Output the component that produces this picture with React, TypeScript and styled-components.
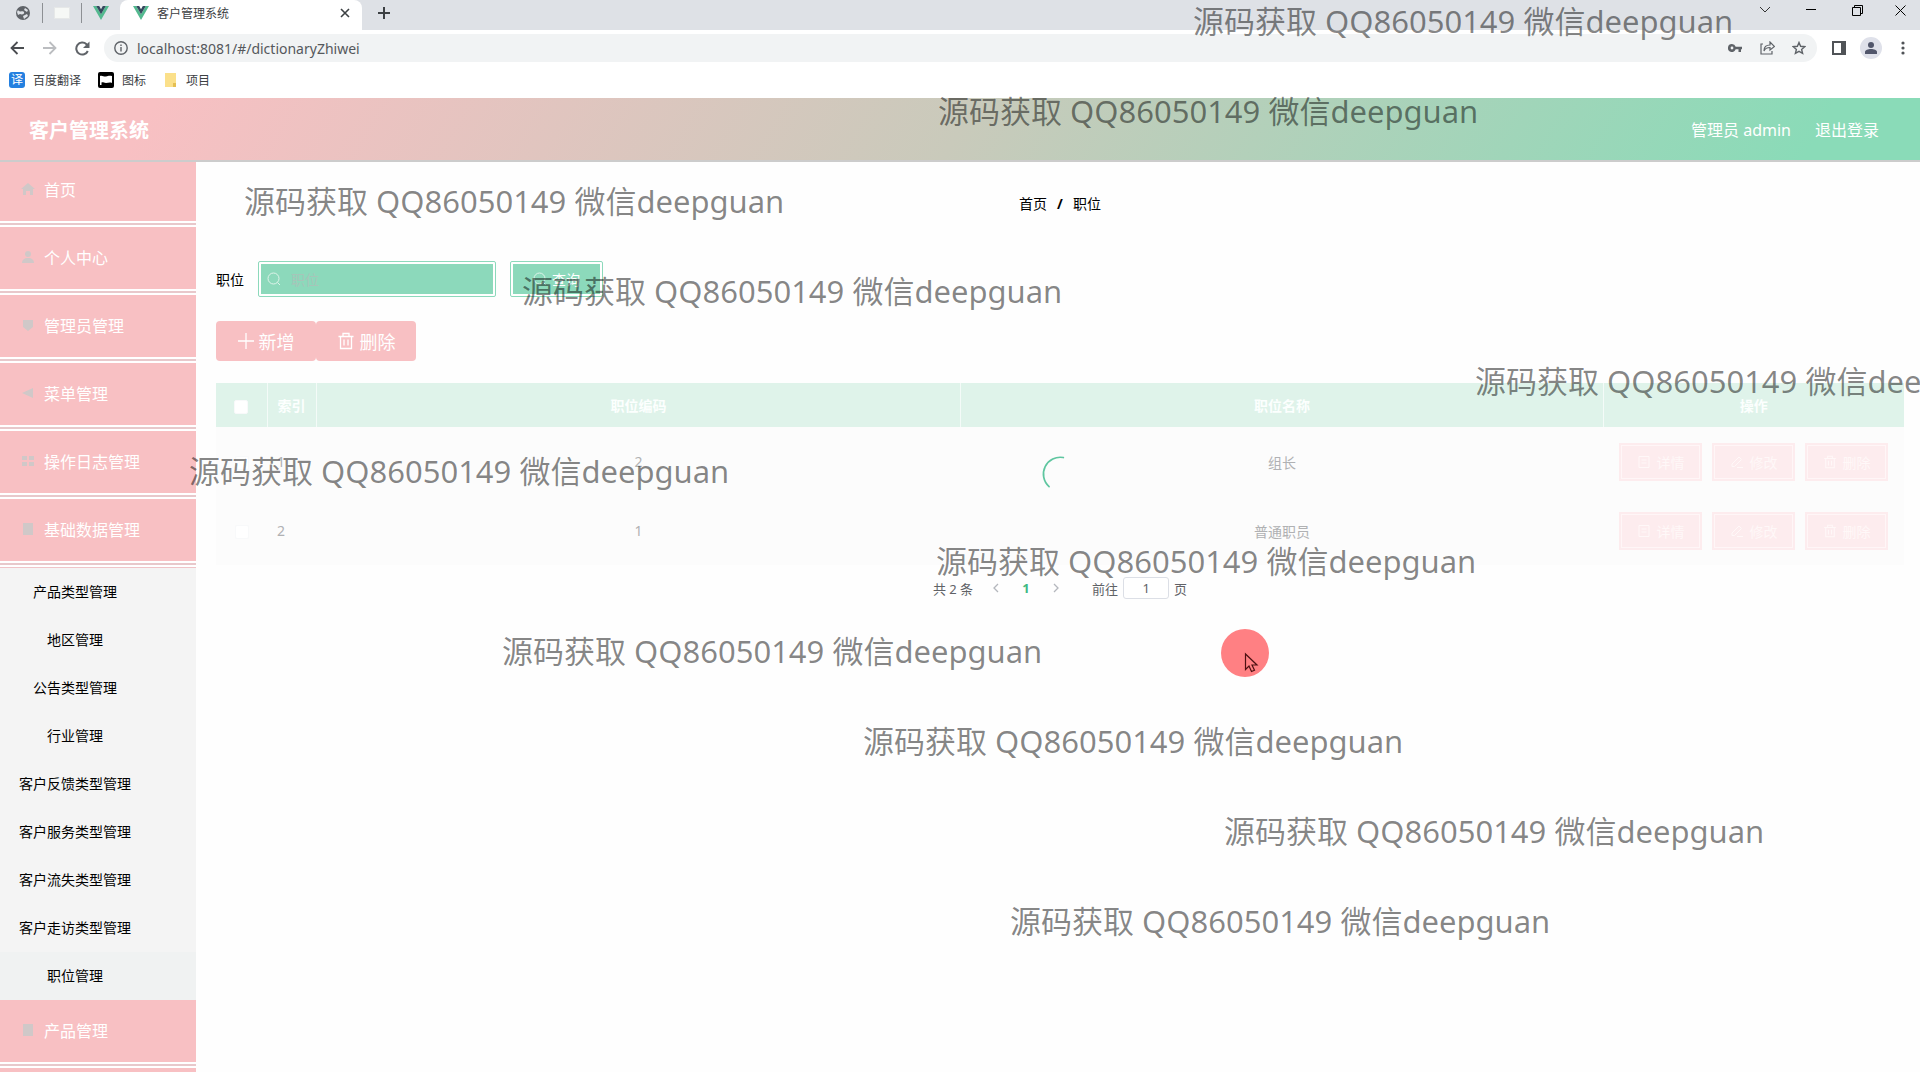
import React from 'react';
import styled, { createGlobalStyle, css } from 'styled-components';

const PINK = '#f8c0c3';
const GREEN = '#8cd9bb';

const GlobalStyle = createGlobalStyle`
  *, *::before, *::after { box-sizing: border-box; }
  html, body, #root { height: 100%; }
  body {
    margin: 0;
    background: #fff;
    font-family: 'Noto Sans', 'Noto Sans CJK SC', sans-serif;
    font-size: 14px;
    color: #000;
    overflow: hidden;
  }
  button, input { font-family: inherit; }
  button { border: 0; padding: 0; background: none; color: inherit; }
  a { color: inherit; text-decoration: none; }
  ul { list-style: none; margin: 0; padding: 0; }
`;

const Screen = styled.div`
  position: relative;
  display: flex;
  flex-direction: column;
  height: 100vh;
  overflow: hidden;
`;

/* ---------- browser window ---------- */

const TabStrip = styled.div`
  display: flex;
  flex: none;
  height: 30px;
  background: #dee1e6;
`;

const PinnedTabs = styled.div`
  display: flex;
  align-items: center;
  width: 120px;
  height: 26px;
  padding-left: 3px;
`;

const PinnedTab = styled.button`
  display: flex;
  align-items: center;
  justify-content: center;
  width: 39px;
  height: 20px;
  & + & { border-left: 1px solid #8d9094; }
`;

const ActiveTab = styled.div`
  display: flex;
  align-items: center;
  gap: 8px;
  width: 242px;
  padding: 0 12px 4px 13px;
  background: #fff;
  border-radius: 8px 8px 0 0;
  font-size: 12px;
  color: #3c4043;
`;

const TabTitle = styled.span`
  flex: 1;
`;

const IconButton = styled.button`
  display: flex;
  align-items: center;
  justify-content: center;
  width: ${(p: { $w?: number }) => p.$w ?? 32}px;
  height: 26px;
`;

const WindowControls = styled.div`
  display: flex;
  margin-left: auto;
  height: 20px;
  align-items: center;
`;

const Toolbar = styled.div`
  display: flex;
  flex: none;
  align-items: center;
  height: 36px;
  padding-right: 1px;
  background: #fff;
`;

const AddressBar = styled.div`
  display: flex;
  flex: 1;
  align-items: center;
  height: 28px;
  margin-left: 6px;
  margin-right: 6px;
  padding: 0 2px 0 10px;
  border-radius: 14px;
  background: #f1f3f4;
`;

const AddressInput = styled.input`
  flex: 1;
  min-width: 0;
  border: 0;
  margin-left: 9px;
  padding: 0;
  background: transparent;
  font-size: 14px;
  color: #55585c;
  outline: none;
`;

const Avatar = styled.span`
  display: flex;
  align-items: center;
  justify-content: center;
  width: 22px;
  height: 22px;
  border-radius: 50%;
  background: #dfe1ea;
`;

const Bookmarks = styled.nav`
  display: flex;
  flex: none;
  align-items: center;
  gap: 17px;
  height: 32px;
  padding: 0 9px 4px;
  font-size: 12px;
  color: #3c4043;
`;

const Bookmark = styled.a`
  display: flex;
  align-items: center;
  gap: 8px;
`;

const TranslateBadge = styled.span`
  width: 16px;
  height: 16px;
  border-radius: 3px;
  background: #2480e0;
  color: #fff;
  font-size: 12px;
  line-height: 16px;
  text-align: center;
`;

/* ---------- application ---------- */

const Header = styled.header`
  display: flex;
  flex: none;
  align-items: center;
  justify-content: space-between;
  height: 64px;
  padding: 0 41px 0 29px;
  border-bottom: 2px solid #ccc;
  background: linear-gradient(120deg, ${PINK} 8%, #c9cabb 50%, #8adbb8 94%);
  color: #fff;
`;

const Brand = styled.h1`
  margin: 0;
  font-size: 20px;
  font-weight: 700;
`;

const UserNav = styled.div`
  display: flex;
  gap: 24px;
  font-size: 16px;
`;

const Body = styled.div`
  display: flex;
  flex: 1;
  min-height: 0;
`;

const Sidebar = styled.nav`
  flex: none;
  width: 196px;
  overflow: hidden;
  & > ul { margin-top: -3px; }
`;

const MenuItem = styled.li`
  height: 68px;
  background: ${PINK};
  &::after {
    content: '';
    display: block;
    height: 6px;
    background: linear-gradient(#fff 2px, #e8c8cb 2px, #e8c8cb 4px, #fff 4px);
  }
`;

const MenuLink = styled.a`
  display: flex;
  align-items: center;
  gap: 8px;
  height: 62px;
  padding: 0 20px 2px;
  color: #fff;
  font-size: 16px;
`;

const SubMenu = styled.ul`
  border-top: 1px solid #f0c4c8;
  background: #f4f4f4;
`;

const SubLink = styled.a`
  display: block;
  width: 100%;
  height: 48px;
  padding-right: 46px;
  background: ${(p: { $active?: boolean }) => (p.$active ? '#f0f2f2' : 'transparent')};
  line-height: 48px;
  text-align: center;
  white-space: nowrap;
`;

const Main = styled.main`
  flex: 1;
  min-width: 0;
  padding: 32px 16px 20px 20px;
  background: #fefefe;
`;

const Breadcrumb = styled.nav`
  display: flex;
  justify-content: center;
  gap: 10px;
  line-height: 20px;
`;

const SearchForm = styled.form`
  display: flex;
  align-items: center;
  gap: 14px;
  margin-top: 47px;
`;

const framed = css`
  display: flex;
  align-items: center;
  height: 36px;
  border: 3px solid #fff;
  border-radius: 2px;
  background: ${GREEN};
  outline: 1px solid ${GREEN};
  outline-offset: -1px;
`;

const SearchBox = styled.div`
  ${framed}
  width: 238px;
  padding-left: 6px;
  gap: 10px;
`;

const SearchInput = styled.input`
  flex: 1;
  min-width: 0;
  border: 0;
  padding: 0;
  background: transparent;
  outline: none;
  font-size: 14px;
  &::placeholder { color: #a6c5b9; opacity: 1; }
`;

const SearchButton = styled.button`
  ${framed}
  justify-content: center;
  gap: 5px;
  width: 93px;
  color: #fff;
  font-size: 14px;
`;

const ButtonBar = styled.div`
  display: flex;
  margin-top: 24px;
`;

const PinkButton = styled.button`
  display: flex;
  align-items: center;
  justify-content: center;
  gap: 5px;
  width: 100px;
  height: 40px;
  border-radius: 4px;
  background: ${PINK};
  color: #fff;
  font-size: 18px;
`;

const TableWrap = styled.div`
  position: relative;
  margin-top: 22px;
`;

const Table = styled.table`
  width: 100%;
  border-collapse: collapse;
  table-layout: fixed;
  text-align: center;
  color: #b0b1b3;
`;

const Th = styled.th`
  height: 44px;
  padding: 0;
  background: #dff3ea;
  color: #fcfffe;
  font-size: 14px;
  & + & { border-left: 1px solid #f4fbf8; }
`;

const Td = styled.td`
  height: 69px;
  padding: 0;
  background: #fcfcfc;
  text-align: ${(p: { $left?: boolean }) => (p.$left ? 'left' : 'center')};
  padding-left: ${(p: { $left?: boolean }) => (p.$left ? 10 : 0)}px;
`;

const Check = styled.input`
  appearance: none;
  display: inline-block;
  width: 14px;
  height: 14px;
  margin: 0;
  vertical-align: middle;
  border: 1px solid #f8f9fa;
  border-radius: 2px;
  background: #fff;
`;

const Actions = styled.div`
  display: flex;
  justify-content: center;
  gap: 10px;
`;

const RowButton = styled.button`
  display: flex;
  align-items: center;
  justify-content: center;
  gap: 6px;
  width: 83px;
  height: 38px;
  border: 1px solid #fdecee;
  outline: 1px solid #fff6f7;
  outline-offset: -3px;
  background: #fdecee;
  color: #fff8f8;
  font-size: 14px;
`;

const Spinner = styled.svg`
  position: absolute;
  top: 50%;
  left: 50%;
  width: 42px;
  height: 42px;
  transform: translate(-50%, -50%);
`;

const Pagination = styled.div`
  display: flex;
  align-items: center;
  justify-content: center;
  margin-top: 12px;
  font-size: 13px;
  color: #606266;
`;

const PageButton = styled.button`
  display: flex;
  align-items: center;
  justify-content: center;
  width: 30px;
  height: 22px;
  font-size: 13px;
  font-weight: 700;
  color: #42b983;
`;

const PageTotal = styled.span`
  margin-right: 8px;
`;

const PageJump = styled.label`
  display: flex;
  align-items: center;
  gap: 5px;
  margin-left: 21px;
`;

const PageInput = styled.input`
  width: 46px;
  height: 22px;
  padding: 0;
  border: 1px solid #dcdfe6;
  border-radius: 3px;
  background: #fff;
  color: #606266;
  font-size: 13px;
  text-align: center;
`;

/* ---------- recording overlay ---------- */

const Overlay = styled.div`
  position: absolute;
  inset: 0;
  overflow: hidden;
  pointer-events: none;
`;

const Watermark = styled.span<{ $x: number; $y: number }>`
  position: absolute;
  left: ${(p) => p.$x}px;
  top: ${(p) => p.$y}px;
  height: 40px;
  line-height: 40px;
  white-space: nowrap;
  font-size: 31px;
  color: rgba(0, 0, 0, 0.48);
`;

const Pointer = styled.svg`
  position: absolute;
  left: 1221px;
  top: 629px;
`;

const VueLogo = () => (
  <svg width="16" height="14" viewBox="0 0 16 14">
    <path d="M0 0h3.2L8 8.3 12.8 0H16L8 13.9z" fill="#53b98f" />
    <path d="M3.2 0h3L8 3.2 9.8 0h3L8 8.3z" fill="#35495e" />
  </svg>
);

const Magnifier = () => (
  <svg width="14" height="14" viewBox="0 0 14 14" fill="none" stroke="#dff4ea">
    <circle cx="6.5" cy="6.5" r="5.5" />
    <path d="M10.5 10.5l2.5 2.5" />
  </svg>
);

const Trash = ({ size = 18 }: { size?: number }) => (
  <svg width={size} height={size} viewBox="0 0 18 18" fill="none" stroke="currentColor" strokeWidth="1.3">
    <path d="M1.5 4.5h15M3.5 4.5v12h11v-12M6 4.5v-3h6v3M7 7.5v6M11 7.5v6" />
  </svg>
);

const Detail = () => (
  <svg width="14" height="14" viewBox="0 0 14 14" fill="none" stroke="currentColor">
    <path d="M2 1.5h10v11H2zM4.500 5h5M4.500 8h5" />
  </svg>
);

const Edit = () => (
  <svg width="14" height="14" viewBox="0 0 14 14" fill="none" stroke="currentColor">
    <path d="M2 9l7-7 2.500 2.500-7 7H2zM7 12.500h6" />
  </svg>
);

const menuShapes: Record<string, React.ReactNode> = {
  home: <path d="M1 8l7-6 7 6h-2v6h-3v-4H6v4H3V8z" />,
  user: <path d="M8 2a3 3 0 110 6 3 3 0 010-6zM2 14c0-3 2-5 6-5s6 2 6 5z" />,
  shield: <path d="M3 3h10v7l-5 4-5-4z" />,
  send: <path d="M2 8l11-5v10z" />,
  grid: <path d="M2 3h5v4H2zM9 3h5v4H9zM2 9h5v4H2zM9 9h5v4H9z" />,
  data: <path d="M3 2h10v12H3z" />,
};

const MenuIcon = ({ name }: { name: string }) => (
  <svg width="16" height="16" viewBox="0 0 16 16" fill="#d0c8c8">
    {menuShapes[name]}
  </svg>
);

const menu = [
  ['首页', 'home'],
  ['个人中心', 'user'],
  ['管理员管理', 'shield'],
  ['菜单管理', 'send'],
  ['操作日志管理', 'grid'],
  ['基础数据管理', 'data'],
];

const subMenu = [
  '产品类型管理', '地区管理', '公告类型管理', '行业管理', '客户反馈类型管理',
  '客户服务类型管理', '客户流失类型管理', '客户走访类型管理', '职位管理',
];

const rows = [
  { index: 1, code: 2, name: '组长' },
  { index: 2, code: 1, name: '普通职员' },
];

const watermarks = [
  [1193, 1], [938, 91], [244, 181], [522, 271], [1475, 361], [189, 451],
  [936, 541], [502, 631], [863, 721], [1224, 811], [1010, 901],
];

const MenuEntry = ({ label, icon }: { label: string; icon: string }) => (
  <MenuItem>
    <MenuLink href="#">
      <MenuIcon name={icon} />
      {label}
    </MenuLink>
  </MenuItem>
);

const Browser = () => (
  <>
    <TabStrip>
      <PinnedTabs>
        <PinnedTab aria-label="网页">
          <svg width="16" height="16" viewBox="0 0 16 16">
            <circle cx="8" cy="8" r="7" fill="#5f6368" />
            <path d="M3 5c2 3 5 0 6 2s-2 3-4 2l-2 1-1-3zM10 3l3 2-1 2-3-2zM8 11l4-2 1 2-4 3z" fill="#dee1e6" />
          </svg>
        </PinnedTab>
        <PinnedTab aria-label="文档">
          <svg width="16" height="12" viewBox="0 0 16 12">
            <path d="M.5.5h15v11H.5z" fill="#f6f8f6" stroke="#e6e8e8" />
          </svg>
        </PinnedTab>
        <PinnedTab aria-label="Vue"><VueLogo /></PinnedTab>
      </PinnedTabs>
      <ActiveTab>
        <VueLogo />
        <TabTitle>客户管理系统</TabTitle>
        <svg width="10" height="10" viewBox="0 0 10 10" stroke="#3c4043" strokeWidth="1.600">
          <path d="M1 1l8 8M9 1L1 9" />
        </svg>
      </ActiveTab>
      <IconButton $w={44} aria-label="新标签页">
        <svg width="12" height="12" viewBox="0 0 12 12" stroke="#3c4043" strokeWidth="2">
          <path d="M6 0v12M0 6h12" />
        </svg>
      </IconButton>
      <WindowControls>
        <IconButton $w={46} aria-label="标签列表">
          <svg width="12" height="8" viewBox="0 0 12 8" fill="none" stroke="#333"><path d="M1 1l5 5 5-5" /></svg>
        </IconButton>
        <IconButton $w={46} aria-label="最小化">
          <svg width="10" height="2" viewBox="0 0 10 2"><path d="M0 0h10v1H0z" /></svg>
        </IconButton>
        <IconButton $w={46} aria-label="还原">
          <svg width="11" height="11" viewBox="0 0 11 11" fill="none" stroke="#000">
            <path d="M.5 2.500h8v8h-8zM2.500 2.500v-2h8v8h-2" />
          </svg>
        </IconButton>
        <IconButton $w={40} aria-label="关闭">
          <svg width="11" height="11" viewBox="0 0 11 11" stroke="#000"><path d="M.5.5l10 10M10.500.5l-10 10" /></svg>
        </IconButton>
      </WindowControls>
    </TabStrip>
    <Toolbar>
      <IconButton $w={34} aria-label="后退">
        <svg width="14" height="14" viewBox="0 0 14 14" fill="none" stroke="#4a4d51" strokeWidth="1.800">
          <path d="M14 7H1.500M7.500 1l-6 6 6 6" />
        </svg>
      </IconButton>
      <IconButton aria-label="前进">
        <svg width="14" height="14" viewBox="0 0 14 14" fill="none" stroke="#bbbdc0" strokeWidth="1.800">
          <path d="M0 7h12.500M6.500 1l6 6-6 6" />
        </svg>
      </IconButton>
      <IconButton aria-label="刷新">
        <svg width="15" height="15" viewBox="0 0 15 15" fill="none" stroke="#5f6368" strokeWidth="2">
          <path d="M12.800 10A6 6 0 1111.500 3.300L13 5" />
          <path d="M14.500.5V7H8z" fill="#5f6368" stroke="none" />
        </svg>
      </IconButton>
      <AddressBar>
        <svg width="14" height="14" viewBox="0 0 14 14" fill="none" stroke="#5f6368" strokeWidth="1.400">
          <circle cx="7" cy="7" r="6.200" />
          <path d="M7 6v4.500M7 3.500v1.500" />
        </svg>
        <AddressInput aria-label="地址" defaultValue="localhost:8081/#/dictionaryZhiwei" />
        <IconButton aria-label="密码">
          <svg width="14" height="8" viewBox="0 0 14 8" fill="#5f6368">
            <path fillRule="evenodd" d="M4 0a4 4 0 013.700 2.700H14v2.600h-1V8h-2.500V5.300H7.700A4 4 0 114 0zm0 2.600a1.400 1.400 0 100 2.800 1.400 1.400 0 000-2.800z" />
          </svg>
        </IconButton>
        <IconButton aria-label="分享">
          <svg width="15" height="14" viewBox="0 0 15 14" fill="none" stroke="#5f6368" strokeWidth="1.200">
            <path d="M3 3H1v10h11v-3M4 10c0-4 2-6 6-6V1l4.500 4.500L10 9V6.500c-3 0-5 1-6 3.500z" />
          </svg>
        </IconButton>
        <IconButton aria-label="收藏">
          <svg width="14" height="14" viewBox="0 0 14 14" fill="none" stroke="#5f6368" strokeWidth="1.400">
            <path d="M7 1.500l1.600 3.800 4.200.4-3.200 2.700 1 4L7 10.300 3.400 12.400l1-4L1.200 5.700l4.200-.4z" />
          </svg>
        </IconButton>
      </AddressBar>
      <IconButton aria-label="侧边栏">
        <svg width="14" height="14" viewBox="0 0 14 14">
          <path d="M1 1h12v12H1z" fill="none" stroke="#505357" strokeWidth="2" />
          <path d="M9 1h4v12H9z" fill="#505357" />
        </svg>
      </IconButton>
      <IconButton aria-label="个人资料">
        <Avatar>
          <svg width="12" height="12" viewBox="0 0 12 12" fill="#51566b">
            <circle cx="6" cy="3" r="3" />
            <path d="M0 12V10c0-2 3-3 6-3s6 1 6 3v2z" />
          </svg>
        </Avatar>
      </IconButton>
      <IconButton aria-label="更多">
        <svg width="4" height="14" viewBox="0 0 4 14" fill="#505357">
          <circle cx="2" cy="2" r="1.600" /><circle cx="2" cy="7" r="1.600" /><circle cx="2" cy="12" r="1.600" />
        </svg>
      </IconButton>
    </Toolbar>
    <Bookmarks>
      <Bookmark href="#"><TranslateBadge>译</TranslateBadge>百度翻译</Bookmark>
      <Bookmark href="#">
        <svg width="16" height="16" viewBox="0 0 16 16">
          <rect width="16" height="16" rx="2" />
          <path d="M2 13V4c2-1 4 1 6 0.500s3-1 6-.5v7c-2-1-4 0-6 0s-3-1-4.500-.5V13z" fill="#fff" />
        </svg>
        图标
      </Bookmark>
      <Bookmark href="#">
        <svg width="15" height="16" viewBox="0 0 15 16">
          <path d="M2 1h11v14H2z" fill="#fbe08a" />
          <path d="M10 11h3v4h-3z" fill="#e5bf52" />
        </svg>
        项目
      </Bookmark>
    </Bookmarks>
  </>
);

export default function App() {
  return (
    <>
      <GlobalStyle />
      <Screen>
        <Browser />
        <Header>
          <Brand>客户管理系统</Brand>
          <UserNav>
            <span>管理员 admin</span>
            <a href="#">退出登录</a>
          </UserNav>
        </Header>
        <Body>
          <Sidebar>
            <ul>
              {menu.map(([label, icon]) => <MenuEntry key={label} label={label} icon={icon} />)}
              <li>
                <SubMenu>
                  {subMenu.map((label) => (
                    <li key={label}>
                      <SubLink href="#" $active={label === '职位管理'}>{label}</SubLink>
                    </li>
                  ))}
                </SubMenu>
              </li>
              <MenuEntry label="产品管理" icon="data" />
              <MenuEntry label="" icon="data" />
            </ul>
          </Sidebar>
          <Main>
            <Breadcrumb>
              <a href="#">首页</a>
              <b>/</b>
              <span>职位</span>
            </Breadcrumb>
            <SearchForm onSubmit={(e) => e.preventDefault()}>
              <label htmlFor="position">职位</label>
              <SearchBox>
                <Magnifier />
                <SearchInput id="position" placeholder="职位" />
              </SearchBox>
              <SearchButton type="submit"><Magnifier />查询</SearchButton>
            </SearchForm>
            <ButtonBar>
              <PinkButton>
                <svg width="16" height="16" viewBox="0 0 16 16" stroke="#fff" strokeWidth="1.300">
                  <path d="M8 0v16M0 8h16" />
                </svg>
                新增
              </PinkButton>
              <PinkButton><Trash />删除</PinkButton>
            </ButtonBar>
            <TableWrap>
              <Table>
                <colgroup>
                  <col width="51" />
                  <col width="49" />
                  <col width="38.2%" />
                  <col />
                  <col width="301" />
                </colgroup>
                <thead>
                  <tr>
                    <Th><Check type="checkbox" aria-label="全选" /></Th>
                    <Th>索引</Th>
                    <Th>职位编码</Th>
                    <Th>职位名称</Th>
                    <Th>操作</Th>
                  </tr>
                </thead>
                <tbody>
                  {rows.map((row) => (
                    <tr key={row.index}>
                      <Td><Check type="checkbox" aria-label={row.name} /></Td>
                      <Td $left>{row.index}</Td>
                      <Td>{row.code}</Td>
                      <Td>{row.name}</Td>
                      <Td>
                        <Actions>
                          <RowButton><Detail />详情</RowButton>
                          <RowButton><Edit />修改</RowButton>
                          <RowButton><Trash size={14} />删除</RowButton>
                        </Actions>
                      </Td>
                    </tr>
                  ))}
                </tbody>
              </Table>
              <Spinner viewBox="0 0 50 50" fill="none" stroke="#5fc6a0" strokeWidth="2" strokeLinecap="round">
                <path d="M29 5.400A20 20 0 0012 40" />
              </Spinner>
            </TableWrap>
            <Pagination>
              <PageTotal>共 2 条</PageTotal>
              <PageButton aria-label="上一页">
                <svg width="6" height="10" viewBox="0 0 6 10" fill="none" stroke="#b4b7bd" strokeWidth="1.300"><path d="M5 1L1 5l4 4" /></svg>
              </PageButton>
              <PageButton>1</PageButton>
              <PageButton aria-label="下一页">
                <svg width="6" height="10" viewBox="0 0 6 10" fill="none" stroke="#b4b7bd" strokeWidth="1.300"><path d="M1 1l4 4-4 4" /></svg>
              </PageButton>
              <PageJump>前往<PageInput defaultValue="1" />页</PageJump>
            </Pagination>
          </Main>
        </Body>
        <Overlay>
          {watermarks.map(([x, y]) => (
            <Watermark key={y} $x={x} $y={y}>源码获取 QQ86050149 微信deepguan</Watermark>
          ))}
          <Pointer width="48" height="48" viewBox="0 0 48 48">
            <circle cx="24" cy="24" r="24" fill="#ff8083" />
            <path d="M24.500 25v15.500l3.500-3.500 2.500 5.500 3-1.300-2.500-5.200h5z" fill="#ff8083" stroke="#4d1012" strokeWidth="1.200" />
          </Pointer>
        </Overlay>
      </Screen>
    </>
  );
}
